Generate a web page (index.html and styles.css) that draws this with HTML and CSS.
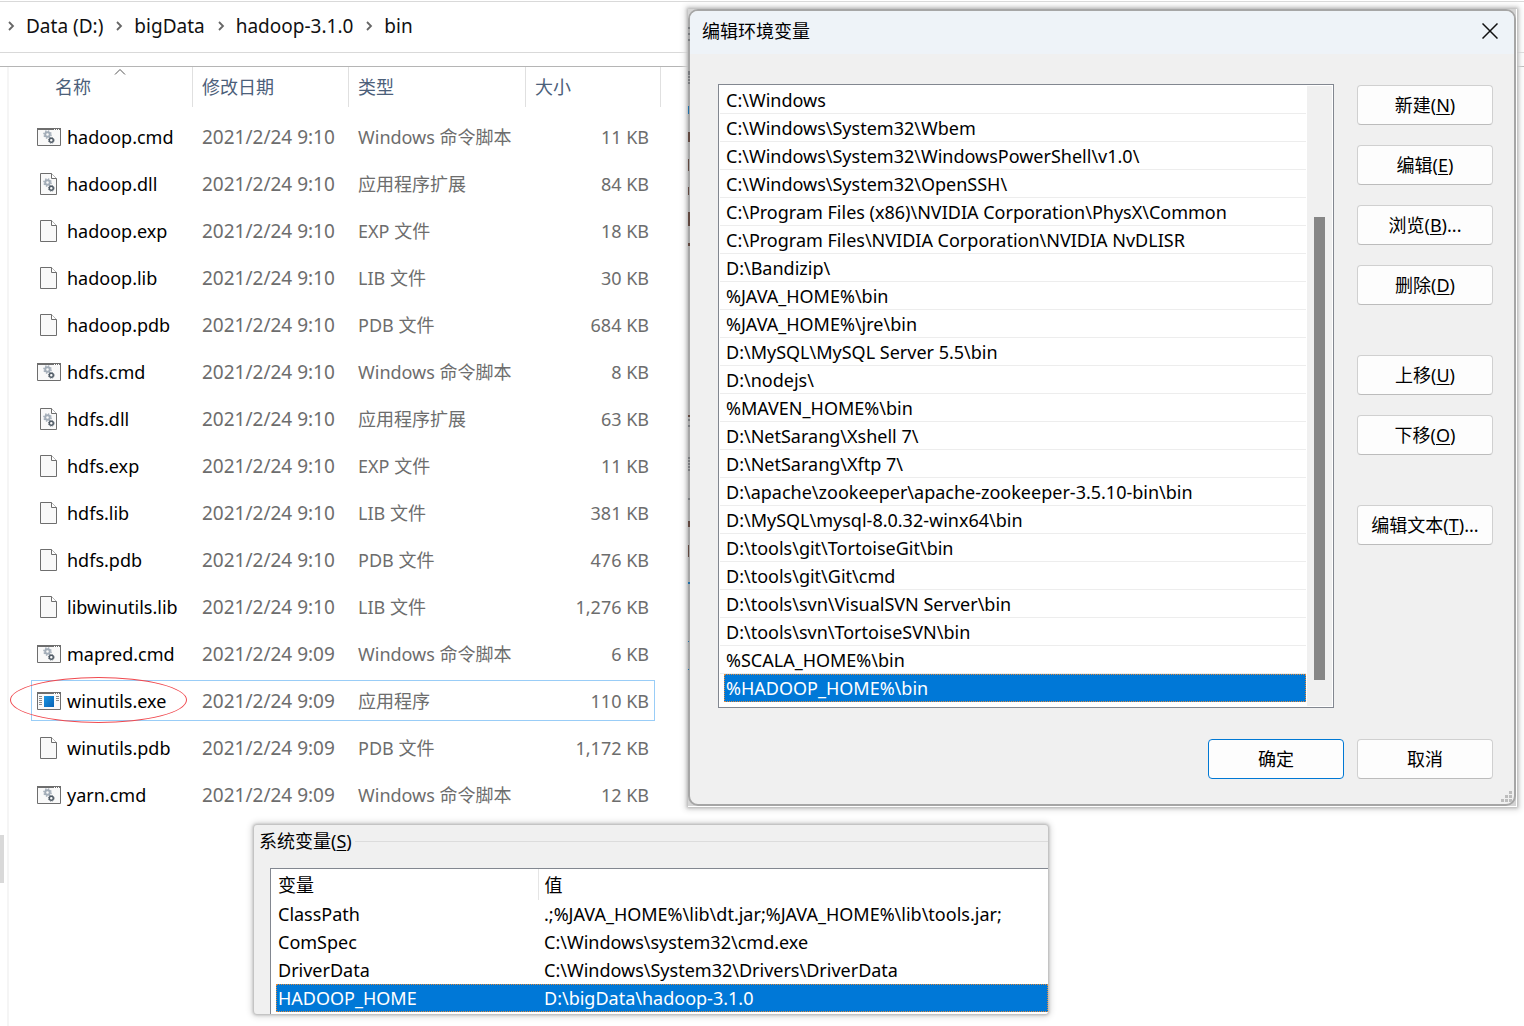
FILE: index.html
```html
<!DOCTYPE html>
<html lang="zh-CN">
<head>
<meta charset="utf-8">
<title>hadoop-3.1.0 bin</title>
<link rel="stylesheet" href="styles.css">
</head>
<body>
<svg class="defs" aria-hidden="true">
  <symbol id="chevron" viewBox="0 0 8 10"><path d="M2 1 6 5 2 9" fill="none" stroke="#666" stroke-width="1.800"/></symbol>
  <symbol id="gears" viewBox="0 0 12 14">
    <circle cx="4.500" cy="4.500" r="2.300" fill="none" stroke="#a3adb8" stroke-width="2"/>
    <circle cx="4.500" cy="4.500" r="3.600" fill="none" stroke="#a3adb8" stroke-width="1.500" stroke-dasharray="1.400 1.427"/>
    <circle cx="8.300" cy="10.300" r="2" fill="none" stroke="#4f5a65" stroke-width="1.500"/>
    <circle cx="8.300" cy="10.300" r="2.900" fill="none" stroke="#6b747d" stroke-width="1" stroke-dasharray="1.200 1.077"/>
  </symbol>
  <symbol id="page" viewBox="0 0 24 24">
    <path d="M3.500 1.500h11l5 5v16h-16z" fill="#f9f9f9" stroke="#6e6e6e"/>
    <path d="M14.500 1.500v5h5" fill="#fff" stroke="#6e6e6e"/>
  </symbol>
  <symbol id="dll" viewBox="0 0 24 24">
    <use href="#page"/>
    <use href="#gears" x="6" y="6" width="12" height="14"/>
  </symbol>
  <symbol id="window" viewBox="0 0 24 24">
    <path d="M.5 3.500h23v17H.5z" fill="#f9f9f9" stroke="#6e6e6e"/>
    <path d="M0 3h24v2H0z" fill="#6e6e6e"/>
    <path d="M17 4.500h1m1 0h1m1 0h1" stroke="#fff"/>
  </symbol>
  <symbol id="cmd" viewBox="0 0 24 24">
    <use href="#window"/>
    <use href="#gears" x="6" y="5" width="12" height="14"/>
  </symbol>
  <symbol id="exe" viewBox="0 0 24 24">
    <linearGradient id="blue" x1="0" y1="0" x2="1" y2="1"><stop offset="0" stop-color="#1b97e5"/><stop offset="1" stop-color="#0661b4"/></linearGradient>
    <use href="#window"/>
    <path d="M7 7h10v11H7z" fill="url(#blue)"/>
    <path d="M2 7.500h3m-3 2h3m-3 2h3m-3 2h3m-3 2h3M19 7.500h3m-3 2h3m-3 2h3" stroke="#8b8b8b"/>
  </symbol>
</svg>

<main class="explorer">
  <nav class="path" aria-label="路径">
    <svg class="chevron"><use href="#chevron"/></svg><a href="#">Data (D:)</a>
    <svg class="chevron"><use href="#chevron"/></svg><a href="#">bigData</a>
    <svg class="chevron"><use href="#chevron"/></svg><a href="#">hadoop-3.1.0</a>
    <svg class="chevron"><use href="#chevron"/></svg><a href="#">bin</a>
  </nav>
  <div class="content">
    <div class="tree"><span class="tree-thumb"></span></div>
    <table class="files">
      <colgroup><col class="c-name"><col class="c-date"><col class="c-type"><col class="c-size"></colgroup>
      <thead>
        <tr>
          <th>名称<svg class="sort" viewBox="0 0 12 7"><path d="M1 6.500 6 1.500l5 5" fill="none" stroke="#555"/></svg></th>
          <th>修改日期</th><th>类型</th><th>大小</th>
        </tr>
      </thead>
      <tbody>
        <tr><td><span class="file"><svg><use href="#cmd"/></svg>hadoop.cmd</span></td><td class="date">2021/2/24 9:10</td><td>Windows 命令脚本</td><td>11 KB</td></tr>
        <tr><td><span class="file"><svg><use href="#dll"/></svg>hadoop.dll</span></td><td class="date">2021/2/24 9:10</td><td>应用程序扩展</td><td>84 KB</td></tr>
        <tr><td><span class="file"><svg><use href="#page"/></svg>hadoop.exp</span></td><td class="date">2021/2/24 9:10</td><td>EXP 文件</td><td>18 KB</td></tr>
        <tr><td><span class="file"><svg><use href="#page"/></svg>hadoop.lib</span></td><td class="date">2021/2/24 9:10</td><td>LIB 文件</td><td>30 KB</td></tr>
        <tr><td><span class="file"><svg><use href="#page"/></svg>hadoop.pdb</span></td><td class="date">2021/2/24 9:10</td><td>PDB 文件</td><td>684 KB</td></tr>
        <tr><td><span class="file"><svg><use href="#cmd"/></svg>hdfs.cmd</span></td><td class="date">2021/2/24 9:10</td><td>Windows 命令脚本</td><td>8 KB</td></tr>
        <tr><td><span class="file"><svg><use href="#dll"/></svg>hdfs.dll</span></td><td class="date">2021/2/24 9:10</td><td>应用程序扩展</td><td>63 KB</td></tr>
        <tr><td><span class="file"><svg><use href="#page"/></svg>hdfs.exp</span></td><td class="date">2021/2/24 9:10</td><td>EXP 文件</td><td>11 KB</td></tr>
        <tr><td><span class="file"><svg><use href="#page"/></svg>hdfs.lib</span></td><td class="date">2021/2/24 9:10</td><td>LIB 文件</td><td>381 KB</td></tr>
        <tr><td><span class="file"><svg><use href="#page"/></svg>hdfs.pdb</span></td><td class="date">2021/2/24 9:10</td><td>PDB 文件</td><td>476 KB</td></tr>
        <tr><td><span class="file"><svg><use href="#page"/></svg>libwinutils.lib</span></td><td class="date">2021/2/24 9:10</td><td>LIB 文件</td><td>1,276 KB</td></tr>
        <tr><td><span class="file"><svg><use href="#cmd"/></svg>mapred.cmd</span></td><td class="date">2021/2/24 9:09</td><td>Windows 命令脚本</td><td>6 KB</td></tr>
        <tr class="focused"><td><span class="file"><svg><use href="#exe"/></svg>winutils.exe</span><span class="ring"></span></td><td class="date">2021/2/24 9:09</td><td>应用程序</td><td>110 KB</td></tr>
        <tr><td><span class="file"><svg><use href="#page"/></svg>winutils.pdb</span></td><td class="date">2021/2/24 9:09</td><td>PDB 文件</td><td>1,172 KB</td></tr>
        <tr><td><span class="file"><svg><use href="#cmd"/></svg>yarn.cmd</span></td><td class="date">2021/2/24 9:09</td><td>Windows 命令脚本</td><td>12 KB</td></tr>
      </tbody>
    </table>
  </div>
</main>

<section class="frame edit-frame">
  <svg class="behind" width="2" height="797" aria-hidden="true">
    <path d="M0 19h2M0 25h2M0 31h2M0 63h2M0 65h2M0 68h2M0 71h2M0 74h2M0 411h2M0 417h2M0 449h2M0 452h2M0 455h2M0 458h2M0 461h2M0 490h2" stroke="#4a4f55"/>
    <path d="M0 97h1v8H0zM0 632h1v1H0zM0 660h1v1H0zM0 573h2v2H0z" fill="#2070a8"/>
    <path d="M0 123h2v10H0zM0 150h1v12H0zM0 178h1v8H0zM0 203h2v14H0zM0 234h2v3H0zM0 406h2v2H0zM0 512h2v6H0zM0 536h1v12H0z" fill="#604840"/>
  </svg>
  <div class="dialog" role="dialog" aria-labelledby="dlg-title">
    <header class="titlebar">
      <h1 id="dlg-title">编辑环境变量</h1>
      <button class="close" aria-label="关闭"><svg width="16" height="16"><path d="m.5.5 15 15m0-15-15 15" stroke="#111" stroke-width="1.500"/></svg></button>
    </header>
    <div class="dialog-body">
      <div class="listbox">
        <ul>
          <li>C:\Windows</li>
          <li>C:\Windows\System32\Wbem</li>
          <li>C:\Windows\System32\WindowsPowerShell\v1.0\</li>
          <li>C:\Windows\System32\OpenSSH\</li>
          <li>C:\Program Files (x86)\NVIDIA Corporation\PhysX\Common</li>
          <li>C:\Program Files\NVIDIA Corporation\NVIDIA NvDLISR</li>
          <li>D:\Bandizip\</li>
          <li>%JAVA_HOME%\bin</li>
          <li>%JAVA_HOME%\jre\bin</li>
          <li>D:\MySQL\MySQL Server 5.5\bin</li>
          <li>D:\nodejs\</li>
          <li>%MAVEN_HOME%\bin</li>
          <li>D:\NetSarang\Xshell 7\</li>
          <li>D:\NetSarang\Xftp 7\</li>
          <li>D:\apache\zookeeper\apache-zookeeper-3.5.10-bin\bin</li>
          <li>D:\MySQL\mysql-8.0.32-winx64\bin</li>
          <li>D:\tools\git\TortoiseGit\bin</li>
          <li>D:\tools\git\Git\cmd</li>
          <li>D:\tools\svn\VisualSVN Server\bin</li>
          <li>D:\tools\svn\TortoiseSVN\bin</li>
          <li>%SCALA_HOME%\bin</li>
          <li class="selected">%HADOOP_HOME%\bin</li>
        </ul>
        <div class="scrollbar"><span></span></div>
      </div>
      <div class="actions">
        <button class="btn">新建(<u>N</u>)</button>
        <button class="btn">编辑(<u>E</u>)</button>
        <button class="btn">浏览(<u>B</u>)...</button>
        <button class="btn">删除(<u>D</u>)</button>
        <button class="btn group">上移(<u>U</u>)</button>
        <button class="btn">下移(<u>O</u>)</button>
        <button class="btn group">编辑文本(<u>T</u>)...</button>
      </div>
    </div>
    <footer class="dialog-footer">
      <button class="btn primary">确定</button>
      <button class="btn">取消</button>
    </footer>
    <svg class="grip" width="11" height="11"><path d="M8 0h3v3H8zM4 4h3v3H4zM8 4h3v3H8zM0 8h3v3H0zM4 8h3v3H4zM8 8h3v3H8z" fill="#bdbdbd"/></svg>
  </div>
</section>

<section class="frame vars-frame">
  <h2 class="group-title">系统变量(<u>S</u>)</h2>
  <div class="vars-box">
    <table class="vars">
      <colgroup><col class="v-name"><col></colgroup>
      <thead><tr><th>变量</th><th>值</th></tr></thead>
      <tbody>
        <tr><td>ClassPath</td><td>.;%JAVA_HOME%\lib\dt.jar;%JAVA_HOME%\lib\tools.jar;</td></tr>
        <tr><td>ComSpec</td><td>C:\Windows\system32\cmd.exe</td></tr>
        <tr><td>DriverData</td><td>C:\Windows\System32\Drivers\DriverData</td></tr>
        <tr class="selected"><td>HADOOP_HOME</td><td>D:\bigData\hadoop-3.1.0</td></tr>
      </tbody>
    </table>
  </div>
</section>
</body>
</html>
```
FILE: styles.css
```css
* { box-sizing: border-box; }
body {
  margin: 0;
  min-height: 100vh;
  position: relative;
  background: #fff;
  color: #000;
  font: 18px/24px "Noto Sans", "Noto Sans CJK SC", sans-serif;
}
.defs { position: absolute; width: 0; height: 0; }
h1, h2 { margin: 0; font-size: 18px; font-weight: 400; }
button { font: inherit; color: inherit; }
u { text-underline-offset: 2px; text-decoration-thickness: 1px; }

/* file explorer */
.explorer { min-height: 100vh; padding-top: 1px; display: flex; flex-direction: column; }
.path {
  display: flex;
  align-items: center;
  height: 52px;
  padding: 0 0 2px 7px;
  border-top: 1px solid #d9d9d9;
  border-bottom: 1px solid #d9d9d9;
  font-size: 19px;
}
.path a { color: #111; text-decoration: none; margin: 0 12px 0 11px; }
.chevron { width: 8px; height: 10px; }
.content { flex: 1; display: flex; align-items: stretch; margin-top: 13px; border-top: 1px solid #b5b5b5; }
.tree { width: 9px; border-right: 2px solid #f5f5f5; padding-top: 768px; margin-right: 19px; }
.tree-thumb { display: block; width: 4px; height: 48px; background: #d9d9d9; }

.files { width: 630px; table-layout: fixed; border-collapse: collapse; align-self: flex-start; color: #6d6d6d; white-space: nowrap; }
.c-name { width: 165px; }
.c-date { width: 156px; }
.c-type { width: 177px; }
.files th { position: relative; height: 46px; padding: 0 0 6px 9px; text-align: left; font-weight: 400; color: #4c607a; }
.files th:first-child { padding-left: 27px; }
.files th::after { content: ""; position: absolute; right: 0; top: 0; width: 1px; height: 40px; background: #e0e0e0; }
.files th:last-child::after { right: -3px; }
.sort { position: absolute; left: 86px; top: 1px; width: 12px; height: 7px; }
.files td { position: relative; height: 47px; padding: 0 9px; }
.files td:last-child { text-align: right; }
.files .date { font-size: 19px; }
.file { display: flex; align-items: center; gap: 6px; color: #000; }
.file svg { width: 24px; height: 24px; flex: none; }
.focused { outline: 1px solid #99cdf7; outline-offset: -4px; }
.ring { position: absolute; left: -18px; top: 0; width: 177px; height: 46px; border: 1px solid #f04a50; border-radius: 50%; }

/* captured windows */
.frame { position: absolute; box-shadow: 0 0 3px 1px #b0b0b0, 0 0 6px 3px #e0e0e0; }
.edit-frame { left: 688px; right: 7px; top: 9px; border: solid #fff; border-width: 0 1px 1px 0; background: #d4d4d4; }
.behind { position: absolute; left: 0; top: 0; z-index: 1; }
.dialog { position: relative; border: 2px solid #a6a6a6; border-radius: 10px; background: #f0f0f0; overflow: hidden; }
.titlebar { display: flex; align-items: center; justify-content: space-between; height: 43px; padding: 0 16px 3px 12px; background: #eef3f8; }
.close { display: flex; padding: 0; border: 0; background: none; }
.dialog-body { display: flex; gap: 23px; padding: 30px 21px 0 28px; }
.listbox { flex: 1; min-width: 0; display: flex; gap: 1px; height: 624px; padding: 1px; border: 1px solid #828790; background: #fff; }
.listbox ul { flex: 1; min-width: 0; margin: 0; padding: 0; list-style: none; }
.listbox li { height: 28px; padding-left: 6px; line-height: 28px; border-bottom: 1px solid #ededed; white-space: nowrap; overflow: hidden; }
.listbox .selected { margin-left: 4px; padding-left: 2px; border: 0; background: #0078d7; color: #fff; outline: 1px dotted #e08a3c; outline-offset: -1px; }
.scrollbar { width: 25px; padding: 131px 7px 0; background: #f0f0f0; }
.scrollbar span { display: block; height: 463px; background: #868686; }
.actions { width: 136px; display: flex; flex-direction: column; gap: 20px; padding-top: 1px; }
.btn { width: 136px; height: 40px; padding: 0; border: 1px solid #d0d0d0; border-bottom-color: #bcbcbc; border-radius: 4px; background: #fdfdfd; }
.btn.group { margin-top: 30px; }
.btn.primary { border-color: #0078d4; }
.dialog-footer { display: flex; justify-content: flex-end; gap: 13px; padding: 31px 21px 25px; }
.grip { position: absolute; right: 2px; bottom: 2px; }

.vars-frame { left: 254px; top: 825px; width: 794px; background: #f0f0f0; border-radius: 3px; overflow: hidden; }
.group-title { display: flex; align-items: center; height: 32px; padding-left: 5px; }
.group-title::after { content: ""; flex: 1; height: 1px; margin-left: 3px; background: #dcdcdc; }
.vars-box { margin: 11px 0 0 16px; padding: 0 0 2px 5px; border: 1px solid #828790; border-width: 1px 0 0 1px; background: #fff; }
.vars { width: 100%; table-layout: fixed; border-collapse: collapse; white-space: nowrap; }
.v-name { width: 262px; }
.vars th { height: 31px; padding: 0 0 0 2px; text-align: left; font-weight: 400; }
.vars th:first-child { border-right: 1px solid #e5e5e5; }
.vars td { height: 28px; padding: 0 0 0 2px; }
.vars th:last-child, .vars td:last-child { padding-left: 6px; }
.vars .selected { background: #0078d7; color: #fff; outline: 1px dotted #e08a3c; outline-offset: -1px; }
```
